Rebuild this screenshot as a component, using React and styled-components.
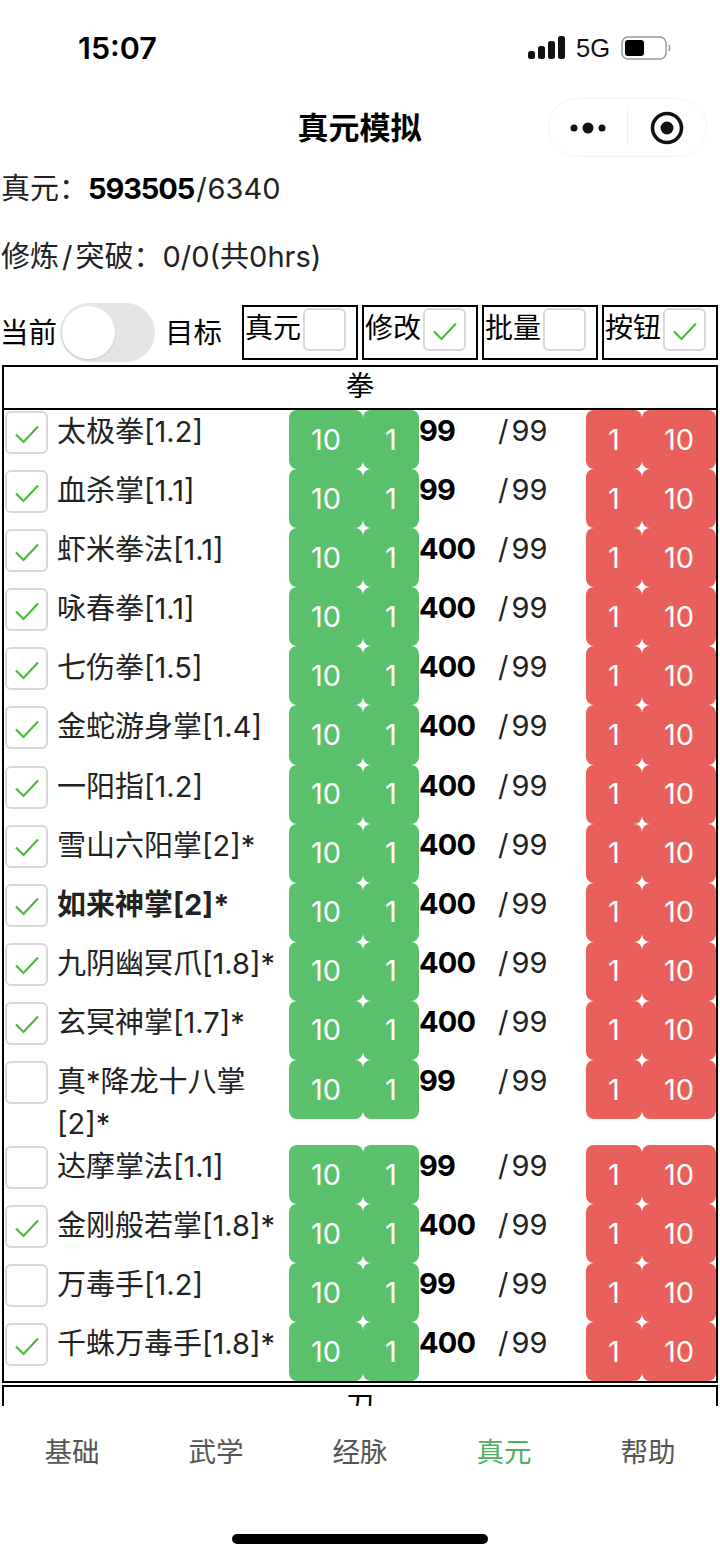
import React from "react";
import styled, { createGlobalStyle } from "styled-components";

const cjk = `Inter, "Noto Sans CJK SC", sans-serif`;

const GlobalStyle = createGlobalStyle`
  html, body {
    margin: 0;
    padding: 0;
    background: #fff;
    font-family: ${cjk};
    color: #000;
  }
  * { box-sizing: border-box; }
`;

const Page = styled.div`
  width: 720px;
  height: 1558px;
  display: flex;
  flex-direction: column;
  overflow: hidden;
  background: #fff;
`;

const StatusBar = styled.div`
  height: 98px;
  flex: none;
  display: flex;
  justify-content: space-between;
  padding: 29px 49px 0 78px;
`;

const Time = styled.div`
  font-size: 30.5px;
  font-weight: 600;
  line-height: 38px;
`;

const StatusIcons = styled.div`
  display: flex;
  align-items: center;
  height: 38px;
  gap: 11px;
  font-family: "Liberation Sans", sans-serif;
  font-size: 25.5px;
  color: #111;
`;

const NavBar = styled.div`
  height: 59px;
  flex: none;
  display: flex;
  align-items: center;
  justify-content: center;
  position: relative;
`;

const NavTitle = styled.div`
  font-size: 31px;
  font-weight: 700;
  line-height: 59px;
  margin-left: -1px;
`;

const Capsule = styled.div`
  position: absolute;
  left: 548px;
  top: 0;
  width: 159px;
  height: 59px;
  border: 1px solid #f4f4f4;
  border-radius: 30px;
  display: flex;
  align-items: center;
`;

const CapsulePart = styled.div`
  flex: 1;
  display: flex;
  align-items: center;
  justify-content: center;
`;

const CapsuleLine = styled.div`
  width: 1px;
  height: 37px;
  background: #f0f0f0;
`;

const Content = styled.div`
  flex: 1;
  min-height: 0;
  overflow: hidden;
`;

const InfoLine = styled.div`
  font-size: 29px;
  line-height: 42px;
  padding-left: 1px;
  margin-top: ${(p) => p.$top}px;
  color: #222;

  b {
    color: #000;
    letter-spacing: -1.1px;
  }
`;

const Slash = styled.span`
  margin: 0 ${(p) => p.$right}px 0 ${(p) => p.$left}px;
`;

const Controls = styled.div`
  display: flex;
  align-items: center;
  height: 59px;
  margin-top: 25px;
`;

const ControlText = styled.span`
  font-size: 28.5px;
  line-height: 40px;
  margin-left: ${(p) => p.$left || 0}px;
`;

const Toggle = styled.div`
  width: 95px;
  height: 59px;
  margin-left: 3px;
  border-radius: 30px;
  background: #e5e5e5;
  padding: 3px 2px;
  flex: none;
`;

const Knob = styled.div`
  width: 53px;
  height: 53px;
  border-radius: 50%;
  background: #fff;
  box-shadow: 0 1px 2px rgba(0, 0, 0, 0.12);
`;

const Options = styled.div`
  display: flex;
  gap: 4px;
  margin-left: 20px;
`;

const OptionBox = styled.div`
  width: 116px;
  height: 55px;
  border: 2px solid #000;
  display: flex;
  align-items: flex-start;
  padding: 1px 0 0 1px;
  font-size: 28px;
  line-height: 40px;
  gap: 2px;
`;

const Check = styled.div`
  width: 43px;
  height: 43px;
  flex: none;
  border: 2px solid #d8d8d8;
  border-radius: 6px;
  background: #fff;
  display: flex;
  align-items: center;
  justify-content: center;
  padding-top: 3px;
`;

const Table = styled.div`
  margin: ${(p) => p.$gap}px 2px 0;
  border: 2px solid #000;
`;

const TableHead = styled.div`
  height: 43px;
  font-size: 28px;
  line-height: 38px;
  text-align: center;
  border-bottom: 2px solid #000;
`;

const Row = styled.div`
  display: flex;
  align-items: flex-start;
  min-height: 59.1px;
`;

const RowCheck = styled(Check)`
  margin: 1px 0 0 1px;
`;

const Name = styled.div`
  width: 241px;
  flex: none;
  padding: 1px 0 0 9px;
  font-size: 29px;
  line-height: 42px;
  font-weight: ${(p) => (p.$bold ? 700 : 400)};
  color: #222;
`;

const Step = styled.div`
  width: ${(p) => p.$width}px;
  height: 59.1px;
  flex: none;
  border-radius: 8px;
  background: ${(p) => (p.$tone === "up" ? "#5bc06c" : "#e95f5b")};
  color: #fff;
  font-size: 29px;
  display: flex;
  align-items: center;
  justify-content: center;
  padding-bottom: 1px;
`;

const Level = styled.div`
  width: 79px;
  flex: none;
  font-size: 29px;
  font-weight: 700;
  line-height: 42px;
  letter-spacing: -0.8px;
`;

const Limit = styled.div`
  width: 88px;
  flex: none;
  font-size: 29px;
  line-height: 42px;
  color: #222;
`;

const TabBar = styled.div`
  flex: none;
  height: 152px;
  background: #fff;
  display: flex;
  flex-direction: column;
  align-items: center;
`;

const Tabs = styled.div`
  width: 100%;
  display: grid;
  grid-template-columns: repeat(5, 1fr);
  padding-top: 26px;
`;

const Tab = styled.div`
  text-align: center;
  font-size: 27.5px;
  line-height: 40px;
  color: ${(p) => (p.$active ? "#4fb05c" : "#555")};
`;

const HomeBar = styled.div`
  width: 256px;
  height: 10px;
  border-radius: 5px;
  background: #000;
  margin-top: 62px;
`;

const items = [
  { name: "太极拳[1.2]", on: true, level: 99 },
  { name: "血杀掌[1.1]", on: true, level: 99 },
  { name: "虾米拳法[1.1]", on: true, level: 400 },
  { name: "咏春拳[1.1]", on: true, level: 400 },
  { name: "七伤拳[1.5]", on: true, level: 400 },
  { name: "金蛇游身掌[1.4]", on: true, level: 400 },
  { name: "一阳指[1.2]", on: true, level: 400 },
  { name: "雪山六阳掌[2]*", on: true, level: 400 },
  { name: "如来神掌[2]*", on: true, level: 400, bold: true },
  { name: "九阴幽冥爪[1.8]*", on: true, level: 400 },
  { name: "玄冥神掌[1.7]*", on: true, level: 400 },
  { name: "真*降龙十八掌[2]*", on: false, level: 99 },
  { name: "达摩掌法[1.1]", on: false, level: 99 },
  { name: "金刚般若掌[1.8]*", on: true, level: 400 },
  { name: "万毒手[1.2]", on: false, level: 99 },
  { name: "千蛛万毒手[1.8]*", on: true, level: 400 },
];

const options = [
  { label: "真元", on: false },
  { label: "修改", on: true },
  { label: "批量", on: false },
  { label: "按钮", on: true },
];

const tabs = ["基础", "武学", "经脉", "真元", "帮助"];

const Tick = () => (
  <svg width="24" height="19" viewBox="0 0 24 19" fill="none">
    <path d="M1 9.5 L8.5 17 L23 1.5" stroke="#4cba3c" strokeWidth="2.2" />
  </svg>
);

const App = () => {
  return (
    <Page>
      <GlobalStyle />
      <StatusBar>
        <Time>15:07</Time>
        <StatusIcons>
          <svg width="37" height="24" viewBox="0 0 37 24" fill="#111">
            <rect x="0" y="15" width="7" height="8" rx="2.5" />
            <rect x="10" y="10" width="7" height="13" rx="2.5" />
            <rect x="20" y="5" width="7" height="18" rx="2.5" />
            <rect x="30" y="0" width="7" height="23" rx="2.5" />
          </svg>
          <span>5G</span>
          <svg width="50" height="26" viewBox="0 0 50 26" fill="none">
            <rect x="1" y="2" width="44" height="22" rx="6" stroke="#999" strokeWidth="1.5" />
            <rect x="4" y="5" width="19" height="16" rx="3" fill="#000" />
            <path d="M47.5 10 C49 11 49 15 47.5 16" stroke="#999" strokeWidth="1.5" />
          </svg>
        </StatusIcons>
      </StatusBar>

      <NavBar>
        <NavTitle>真元模拟</NavTitle>
        <Capsule>
          <CapsulePart>
            <svg width="36" height="14" viewBox="0 0 36 14" fill="#111">
              <circle cx="4" cy="7" r="3.5" />
              <circle cx="18" cy="7" r="5.5" />
              <circle cx="32" cy="7" r="3.5" />
            </svg>
          </CapsulePart>
          <CapsuleLine />
          <CapsulePart>
            <svg width="34" height="34" viewBox="0 0 34 34" fill="none">
              <circle cx="17" cy="17" r="14.5" stroke="#111" strokeWidth="3.6" />
              <circle cx="17" cy="17" r="6.5" fill="#111" />
            </svg>
          </CapsulePart>
        </Capsule>
      </NavBar>

      <Content>
        <InfoLine $top={11}>
          真元：<b>593505</b><Slash $left={2} $right={1}>/</Slash>6340
        </InfoLine>
        <InfoLine $top={26}>
          修炼<Slash $left={3} $right={3}>/</Slash>突破：0/0(共0hrs)
        </InfoLine>

        <Controls>
          <ControlText>当前</ControlText>
          <Toggle>
            <Knob />
          </Toggle>
          <ControlText $left={10}>目标</ControlText>
          <Options>
            {options.map((o) => (
              <OptionBox key={o.label}>
                {o.label}
                <Check>{o.on && <Tick />}</Check>
              </OptionBox>
            ))}
          </Options>
        </Controls>

        <Table $gap={3}>
          <TableHead>拳</TableHead>
          {items.map((item) => (
            <Row key={item.name}>
              <RowCheck>{item.on && <Tick />}</RowCheck>
              <Name $bold={item.bold}>{item.name}</Name>
              <Step $tone="up" $width={74}>10</Step>
              <Step $tone="up" $width={56}>1</Step>
              <Level>{item.level}</Level>
              <Limit>
                <Slash $left={0} $right={3}>/</Slash>99
              </Limit>
              <Step $tone="down" $width={56}>1</Step>
              <Step $tone="down" $width={74}>10</Step>
            </Row>
          ))}
        </Table>
        <Table $gap={2}>
          <TableHead>刀</TableHead>
        </Table>
      </Content>

      <TabBar>
        <Tabs>
          {tabs.map((t) => (
            <Tab key={t} $active={t === "真元"}>{t}</Tab>
          ))}
        </Tabs>
        <HomeBar />
      </TabBar>
    </Page>
  );
};

export default App;
